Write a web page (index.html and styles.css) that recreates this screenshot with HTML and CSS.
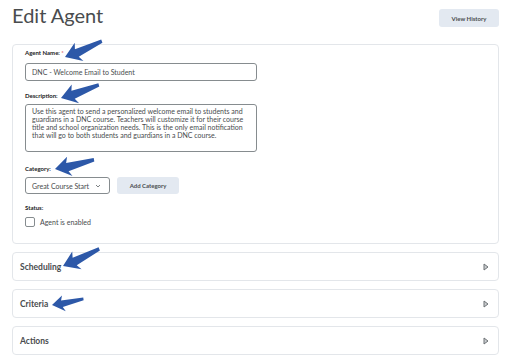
FILE: index.html
```html
<!DOCTYPE html>
<html lang="en">
<head>
    <meta charset="UTF-8">
    <meta name="viewport" content="width=device-width, initial-scale=1.0">
    <link rel="stylesheet" href="styles.css">
    <title>Edit Agent</title>
</head>
<body>
    <div id="page">
        <div class="header">
            <h1>Edit Agent</h1>
            <button class="btn btn-history">View History</button>
        </div>

        <div class="card main-card">
            <div class="field">
                <label class="label">Agent Name: <span class="req">*</span></label>
                <div class="input">DNC - Welcome Email to Student</div>
            </div>
            <div class="field">
                <label class="label">Description:</label>
                <div class="textarea">Use this agent to send a personalized welcome email to students and guardians in a DNC course. Teachers will customize it for their course title and school organization needs. This is the only email notification that will go to both students and guardians in a DNC course.</div>
            </div>
            <div class="field category">
                <label class="label">Category:</label>
                <div class="row">
                    <div class="select">
                        <span>Great Course Start</span>
                        <svg width="6" height="4" viewBox="0 0 6 4"><path d="M1 1 L3 3 L5 1" fill="none" stroke="#6e7376" stroke-width="0.9"/></svg>
                    </div>
                    <button class="btn btn-add">Add Category</button>
                </div>
            </div>
            <div class="field status">
                <label class="label">Status:</label>
                <div class="check-row">
                    <span class="checkbox"></span>
                    <span>Agent is enabled</span>
                </div>
            </div>
        </div>

        <div class="card section">
            <span>Scheduling</span>
            <svg class="tri" width="6" height="8" viewBox="0 0 6 8"><path d="M1 1 L5 4 L1 7 Z" fill="#c9cccf" stroke="#6e7376" stroke-width="1"/></svg>
        </div>
        <div class="card section">
            <span>Criteria</span>
            <svg class="tri" width="6" height="8" viewBox="0 0 6 8"><path d="M1 1 L5 4 L1 7 Z" fill="#c9cccf" stroke="#6e7376" stroke-width="1"/></svg>
        </div>
        <div class="card section">
            <span>Actions</span>
            <svg class="tri" width="6" height="8" viewBox="0 0 6 8"><path d="M1 1 L5 4 L1 7 Z" fill="#c9cccf" stroke="#6e7376" stroke-width="1"/></svg>
        </div>
    </div>

    <!-- annotation arrows drawn over the screenshot -->
    <svg class="arrows" width="510" height="361" viewBox="0 0 510 361">
        <defs>
            <path id="arrow" d="M0 0 L14 -10 L12 -4 L40 -4 L40 -0.5 L13 4.5 L16 10 Z"/>
        </defs>
        <use href="#arrow" transform="translate(65 57) rotate(-20)"/>
        <use href="#arrow" transform="translate(61 98) rotate(-16)"/>
        <use href="#arrow" transform="translate(55 169) rotate(-10)"/>
        <use href="#arrow" transform="translate(63 266) rotate(-22)"/>
        <use href="#arrow" transform="translate(52 305) rotate(-8) scale(0.8)"/>
    </svg>
</body>
</html>
```

FILE: styles.css
```css
body {
    margin: 0;
    background: #ffffff;
    font-family: Lato, "Noto Sans", sans-serif;
    color: #494c4e;
}

#page {
    padding: 0 11px 0 12px;
}

/* Header */
.header {
    display: flex;
    justify-content: space-between;
    align-items: flex-start;
    height: 44px;
}

.header h1 {
    margin: 3px 0 0 0;
    font-size: 20px;
    font-weight: 400;
    color: #494c4e;
}

.btn {
    border: none;
    border-radius: 3px;
    background-color: #e3e9f1;
    color: #494c4e;
    font-family: Lato, sans-serif;
    font-weight: 700;
    font-size: 6px;
    padding: 0;
}

.btn-history {
    margin-top: 9px;
    width: 60px;
    height: 18px;
}

/* Cards */
.card {
    border: 1px solid #e3e6ea;
    border-radius: 4px;
    box-sizing: border-box;
}

.main-card {
    height: 200px;
    padding: 4px 0 0 12px;
}

.label {
    display: block;
    font-size: 6px;
    font-weight: 700;
    color: #202122;
    line-height: 8px;
    margin-bottom: 4px;
}

.field:first-child .label {
    margin-bottom: 6px;
}

.field + .field {
    margin-top: 11px;
}

.req {
    color: #cd2026;
    font-weight: 400;
}

.input {
    width: 232px;
    height: 18px;
    box-sizing: border-box;
    border: 1px solid #868c8f;
    border-radius: 3px;
    font-size: 7px;
    line-height: 16px;
    padding-left: 6px;
}

.textarea {
    width: 232px;
    height: 48px;
    box-sizing: border-box;
    border: 1px solid #868c8f;
    border-radius: 3px;
    font-size: 7px;
    line-height: 8px;
    padding: 2px 6px;
}

.field.category {
    margin-top: 13px;
}

.row {
    display: flex;
    gap: 7px;
}

.select {
    display: flex;
    align-items: center;
    justify-content: space-between;
    width: 85px;
    height: 17px;
    box-sizing: border-box;
    border: 1px solid #868c8f;
    border-radius: 3px;
    font-size: 7px;
    padding: 0 8px 0 6px;
}

.btn-add {
    width: 62px;
    height: 17px;
}

.field.status {
    margin-top: 10px;
}

.status .label {
    margin-bottom: 5px;
}

.check-row {
    display: flex;
    align-items: center;
    gap: 5px;
    font-size: 7px;
}

.checkbox {
    width: 8px;
    height: 8px;
    border: 1px solid #868c8f;
    border-radius: 2px;
}

.section {
    display: flex;
    justify-content: space-between;
    align-items: center;
    height: 29px;
    margin-top: 8px;
    padding: 0 9px 0 7px;
    font-size: 8.5px;
    font-weight: 700;
    color: #494c4e;
}

/* Arrows overlay */
.arrows {
    position: absolute;
    left: 0;
    top: 0;
    pointer-events: none;
    fill: #2d58a8;
}
```
